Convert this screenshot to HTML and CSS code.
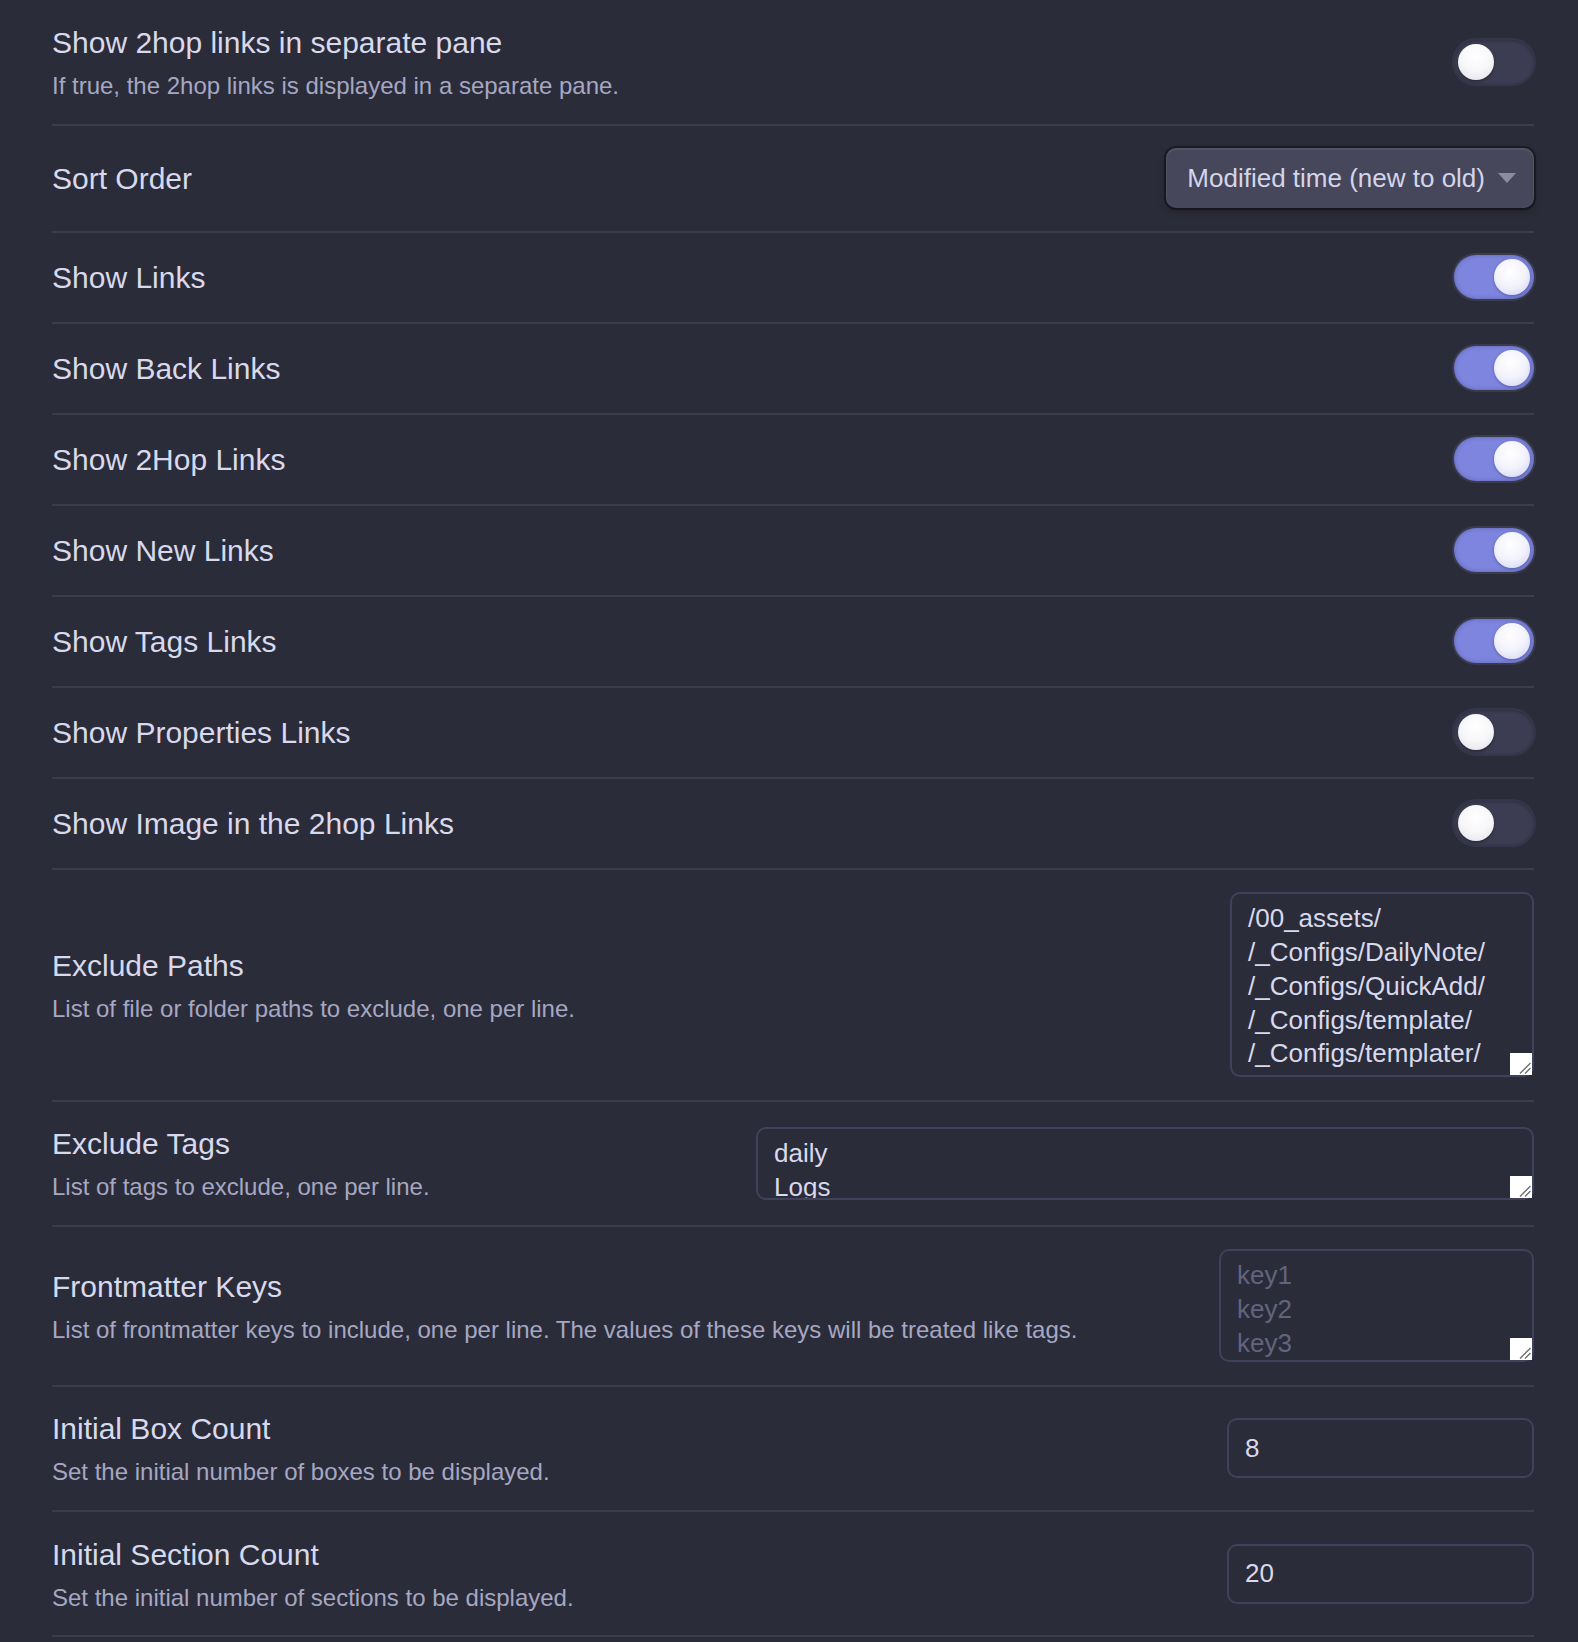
FILE: index.html
```html
<!DOCTYPE html>
<html lang="en">
<head>
<meta charset="utf-8">
<title>Settings</title>
<link rel="stylesheet" href="styles.css">
</head>
<body>
<div class="setting-list">
  <div class="setting-item first">
    <div class="info">
      <div class="name">Show 2hop links in separate pane</div>
      <div class="desc">If true, the 2hop links is displayed in a separate pane.</div>
    </div>
    <div class="control"><div class="toggle"><span class="knob"></span></div></div>
  </div>

  <div class="setting-item">
    <div class="info"><div class="name">Sort Order</div></div>
    <div class="control">
      <div class="dropdown">
        <span class="dropdown-text">Modified time (new to old)</span>
        <svg class="dropdown-arrow" width="18" height="10" viewBox="0 0 18 10"><path d="M0 0 L18 0 L9 10 Z" fill="#8b8c9e"/></svg>
      </div>
    </div>
  </div>

  <div class="setting-item">
    <div class="info"><div class="name">Show Links</div></div>
    <div class="control"><div class="toggle on"><span class="knob"></span></div></div>
  </div>
  <div class="setting-item">
    <div class="info"><div class="name">Show Back Links</div></div>
    <div class="control"><div class="toggle on"><span class="knob"></span></div></div>
  </div>
  <div class="setting-item">
    <div class="info"><div class="name">Show 2Hop Links</div></div>
    <div class="control"><div class="toggle on"><span class="knob"></span></div></div>
  </div>
  <div class="setting-item">
    <div class="info"><div class="name">Show New Links</div></div>
    <div class="control"><div class="toggle on"><span class="knob"></span></div></div>
  </div>
  <div class="setting-item">
    <div class="info"><div class="name">Show Tags Links</div></div>
    <div class="control"><div class="toggle on"><span class="knob"></span></div></div>
  </div>
  <div class="setting-item">
    <div class="info"><div class="name">Show Properties Links</div></div>
    <div class="control"><div class="toggle"><span class="knob"></span></div></div>
  </div>
  <div class="setting-item">
    <div class="info"><div class="name">Show Image in the 2hop Links</div></div>
    <div class="control"><div class="toggle"><span class="knob"></span></div></div>
  </div>

  <div class="setting-item">
    <div class="info">
      <div class="name">Exclude Paths</div>
      <div class="desc">List of file or folder paths to exclude, one per line.</div>
    </div>
    <div class="control">
      <div class="area-wrap">
        <textarea class="area area-paths" spellcheck="false">/00_assets/
/_Configs/DailyNote/
/_Configs/QuickAdd/
/_Configs/template/
/_Configs/templater/</textarea>
        <span class="grip"><svg width="22" height="22" viewBox="0 0 22 22"><path d="M10 20.5 L20.5 10 M15 20.5 L20.5 15" stroke="#6f6f6f" stroke-width="1.4" fill="none"/></svg></span>
      </div>
    </div>
  </div>

  <div class="setting-item">
    <div class="info">
      <div class="name">Exclude Tags</div>
      <div class="desc">List of tags to exclude, one per line.</div>
    </div>
    <div class="control">
      <div class="area-wrap">
        <textarea class="area area-tags" spellcheck="false">daily
Logs</textarea>
        <span class="grip"><svg width="22" height="22" viewBox="0 0 22 22"><path d="M10 20.5 L20.5 10 M15 20.5 L20.5 15" stroke="#6f6f6f" stroke-width="1.4" fill="none"/></svg></span>
      </div>
    </div>
  </div>

  <div class="setting-item">
    <div class="info">
      <div class="name">Frontmatter Keys</div>
      <div class="desc">List of frontmatter keys to include, one per line. The values of these keys will be treated like tags.</div>
    </div>
    <div class="control">
      <div class="area-wrap">
        <textarea class="area area-keys" spellcheck="false" placeholder="key1
key2
key3"></textarea>
        <span class="grip"><svg width="22" height="22" viewBox="0 0 22 22"><path d="M10 20.5 L20.5 10 M15 20.5 L20.5 15" stroke="#6f6f6f" stroke-width="1.4" fill="none"/></svg></span>
      </div>
    </div>
  </div>

  <div class="setting-item">
    <div class="info">
      <div class="name">Initial Box Count</div>
      <div class="desc">Set the initial number of boxes to be displayed.</div>
    </div>
    <div class="control"><input class="text-input" type="text" value="8"></div>
  </div>

  <div class="setting-item">
    <div class="info">
      <div class="name">Initial Section Count</div>
      <div class="desc">Set the initial number of sections to be displayed.</div>
    </div>
    <div class="control"><input class="text-input" type="text" value="20"></div>
  </div>
</div>
</body>
</html>
```

FILE: styles.css
```css
html, body {
  margin: 0;
  padding: 0;
  background: #2b2c39;
}

body {
  font-family: "Liberation Sans", Arial, sans-serif;
  color: #d8d9ec;
}

.setting-list {
  margin: 0 44px 0 52px;
  border-bottom: 2px solid #3b3c4e;
}

.setting-item {
  display: flex;
  align-items: center;
  padding: 22.5px 0;
  border-top: 2px solid #3b3c4e;
}

.setting-item.first {
  border-top: none;
  padding-top: 23px;
}

.info {
  flex: 1 1 auto;
  min-width: 0;
}

.name {
  font-size: 30px;
  line-height: 1.3;
  color: #d8d9ec;
}

.desc {
  font-size: 24px;
  line-height: 1.3;
  padding-top: 8px;
  color: #a6a7c2;
}

.control {
  flex: 0 0 auto;
  display: flex;
  justify-content: flex-end;
  align-items: center;
}

/* toggle */
.toggle {
  width: 80px;
  height: 44px;
  box-sizing: border-box;
  padding: 4px;
  border-radius: 22px;
  background: #3c3d52;
  box-shadow: 0 0 0 2px #35364a, inset 0 1px 3px rgba(0, 0, 0, 0.25);
  display: flex;
  justify-content: flex-start;
  align-items: center;
}

.toggle.on {
  background: #7d85de;
  box-shadow: 0 0 0 2px #3a3b4d, inset 0 0 4px rgba(40, 40, 90, 0.35);
  justify-content: flex-end;
}

.knob {
  width: 36px;
  height: 36px;
  border-radius: 50%;
  background: radial-gradient(circle at 50% 35%, #ffffff 0%, #f7f7fa 50%, #dedee6 100%);
  box-shadow: 0 2px 3px rgba(0, 0, 0, 0.3);
}

.toggle.on .knob {
  background: radial-gradient(circle at 45% 35%, #ffffff 0%, #f2f2fc 50%, #cdd0f2 100%);
  box-shadow: 0 1px 3px rgba(20, 20, 60, 0.35);
}

/* dropdown */
.dropdown {
  height: 60px;
  box-sizing: border-box;
  display: flex;
  align-items: center;
  padding: 0 18px 0 21px;
  border-radius: 10px;
  background: #46475a;
  box-shadow:
    inset 0 1px 1px 1px rgba(255, 255, 255, 0.07),
    0 4px 8px rgba(0, 0, 0, 0.15),
    0 2px 4px rgba(0, 0, 0, 0.2),
    0 0 0 2px #1d1d25;
}

.dropdown-text {
  font-size: 26px;
  color: #d4d5ea;
  white-space: nowrap;
}

.dropdown-arrow {
  margin-left: 13px;
  display: block;
}

/* textarea */
.area-wrap {
  position: relative;
  display: block;
}

.area {
  display: block;
  box-sizing: border-box;
  font-family: "Liberation Sans", Arial, sans-serif;
  font-size: 26px;
  line-height: 1.3;
  color: #d8d9ec;
  background: transparent;
  border: 2px solid #40415a;
  border-radius: 10px;
  padding: 8px 16px;
  margin: 0;
  resize: none;
  overflow: hidden;
  outline: none;
}

.area::placeholder {
  color: #62647e;
}

.grip {
  position: absolute;
  right: 2px;
  bottom: 2px;
  width: 22px;
  height: 22px;
  background: #ffffff;
  display: block;
}

.grip svg {
  display: block;
}

.area-paths {
  width: 304px;
  height: 185px;
}

.area-tags {
  width: 778px;
  height: 73px;
}

.area-keys {
  width: 315px;
  height: 113px;
}

/* text input */
.text-input {
  display: block;
  box-sizing: border-box;
  width: 307px;
  height: 60px;
  font-family: "Liberation Sans", Arial, sans-serif;
  font-size: 26px;
  color: #d8d9ec;
  background: transparent;
  border: 2px solid #40415a;
  border-radius: 10px;
  padding: 0 16px;
  margin: 0;
  outline: none;
}
```
